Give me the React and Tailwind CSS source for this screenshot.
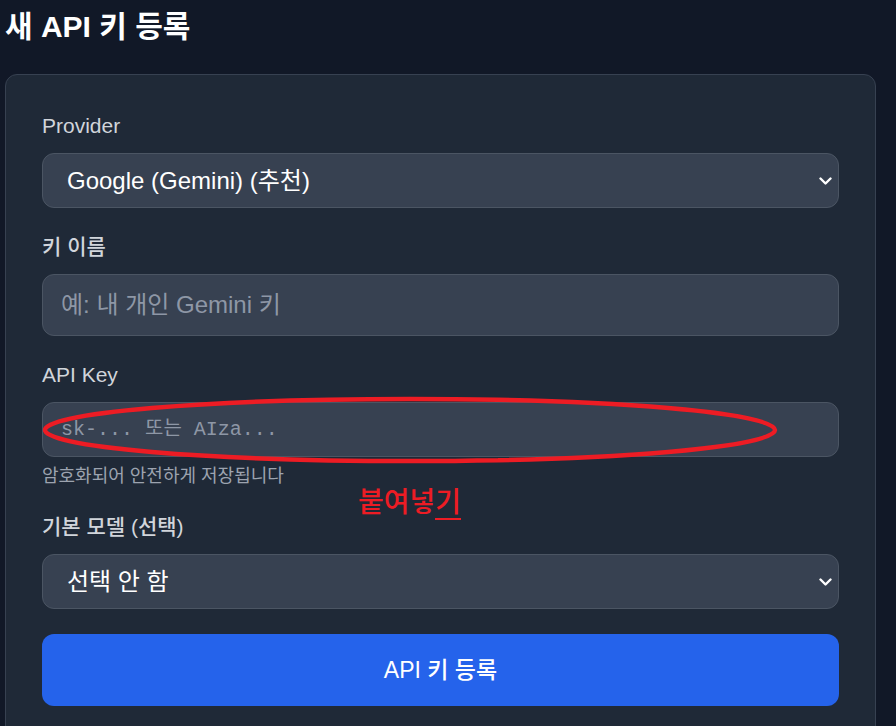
import { useState } from 'react';

const FONT = "font-['Liberation_Sans','Noto_Sans_CJK_KR',sans-serif]";

const Chevron = () => (
  <svg
    className="pointer-events-none absolute right-[7px] top-1/2 -translate-y-1/2"
    width="13"
    height="9"
    viewBox="0 0 13 9"
    fill="none"
    stroke="white"
    strokeWidth="2.4"
    strokeLinecap="round"
    strokeLinejoin="round"
  >
    <path d="M1.5 2l5 5 5-5" />
  </svg>
);

const Label = ({ children, className = '' }) => (
  <label className={`block h-[30px] leading-[30px] text-[21px] text-[#d1d5db] mb-[12px] ${className}`}>
    {children}
  </label>
);

const App = () => {
  const [provider, setProvider] = useState('google');
  const [model, setModel] = useState('');

  return (
    <div className={`min-h-[726px] bg-[#111827] pl-[5px] pt-[6px] overflow-hidden ${FONT}`}>
      <h1 className="h-[42px] leading-[42px] text-[30px] font-bold text-white mb-[26px]">새 API 키 등록</h1>

      <div className="relative w-[871px] rounded-[12px] border border-[#374151] bg-[#1f2937] px-[36px] pt-[36px] pb-[40px]">
        <div className="flex flex-col gap-[24px]">
          <div>
            <Label>Provider</Label>
            <div className="relative">
              <select
                value={provider}
                onChange={(e) => setProvider(e.target.value)}
                className="block w-full h-[55px] appearance-none rounded-[12px] border border-[#4b5563] bg-[#374151] pl-[24px] text-[24px] text-white outline-none"
              >
                <option value="google">Google (Gemini) (추천)</option>
                <option value="openai">OpenAI (GPT)</option>
                <option value="anthropic">Anthropic (Claude)</option>
              </select>
              <Chevron />
            </div>
          </div>

          <div>
            <Label className="font-medium">키 이름</Label>
            <input
              type="text"
              placeholder="예: 내 개인 Gemini 키"
              className="block w-full h-[62px] rounded-[12px] border border-[#4b5563] bg-[#374151] px-[18px] text-[24px] text-white placeholder:text-[#8e97a6] outline-none"
            />
          </div>

          <div>
            <Label>API Key</Label>
            <input
              type="password"
              placeholder="sk-... 또는 AIza..."
              className="block w-full h-[55px] rounded-[12px] border border-[#4b5563] bg-[#374151] px-[18px] font-['Liberation_Mono','Noto_Sans_CJK_KR',monospace] text-[20px] text-white placeholder:text-[#8e97a6] outline-none"
            />
            <p className="mt-[7px] h-[24px] leading-[24px] text-[18px] text-[#9ca3af]">암호화되어 안전하게 저장됩니다</p>
          </div>

          <div>
            <Label className="font-medium">기본 모델 (선택)</Label>
            <div className="relative">
              <select
                value={model}
                onChange={(e) => setModel(e.target.value)}
                className="block w-full h-[55px] appearance-none rounded-[12px] border border-[#4b5563] bg-[#374151] pl-[24px] text-[24px] text-white outline-none"
              >
                <option value="">선택 안 함</option>
                <option value="gemini-pro">gemini-1.5-pro</option>
              </select>
              <Chevron />
            </div>
          </div>
        </div>

        <button className="mt-[25px] block w-full h-[72px] rounded-[12px] bg-[#2563eb] text-[23px] font-medium text-white">
          API 키 등록
        </button>

        {/* annotation: red circle + note */}
        <svg className="pointer-events-none absolute left-[34px] top-[319px]" width="740" height="72" viewBox="0 0 740 72" fill="none">
          <ellipse cx="370" cy="36" rx="365" ry="31" stroke="#ed1c24" strokeWidth="4.5" />
        </svg>
        <div className="pointer-events-none absolute left-[352px] top-[410px] text-[28px] font-medium leading-[36px] text-[#ed1c24]">
          붙여넣<span className="border-b-2 border-[#ed1c24]">기</span>
        </div>
      </div>
    </div>
  );
};

export default App;
